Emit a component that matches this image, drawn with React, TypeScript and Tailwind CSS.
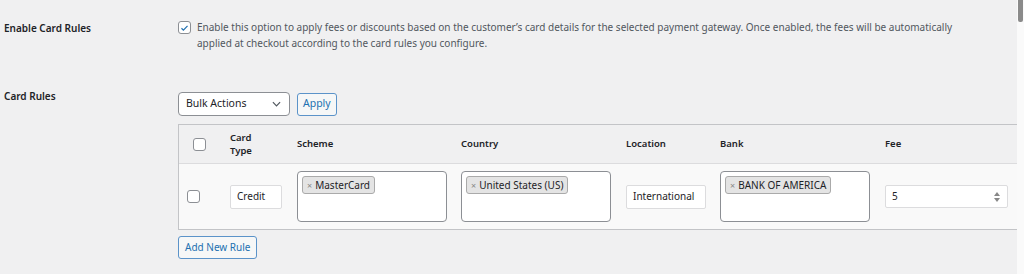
import React from "react";

const font = { fontFamily: '"Noto Sans", "Open Sans", sans-serif' };

const Tag = ({ label }: { label: string }) => (
  <span className="inline-flex items-center h-[18px] px-[4px] rounded-[3px] border border-[#aaaaaa] bg-[#e4e4e4] text-[10px] text-[#1d2327] leading-none whitespace-nowrap">
    <span className="text-[#888] text-[9px] mr-[3px]">×</span>
    {label}
  </span>
);

const MultiSelect = ({ value }: { value: string }) => (
  <div className="w-[150px] h-[51px] rounded-[4px] border border-[#8c8f94] bg-white p-[4px]">
    <Tag label={value} />
  </div>
);

const Check = ({ checked = false }: { checked?: boolean }) => (
  <span className="flex items-center justify-center w-[13px] h-[13px] rounded-[3px] border border-[#8c8f94] bg-white">
    {checked && (
      <svg viewBox="0 0 20 20" className="w-[12px] h-[12px]">
        <path d="M4.5 10.5l3.5 3.5 7.5-8" fill="none" stroke="#2271b1" strokeWidth="2.2" />
      </svg>
    )}
  </span>
);

export default function App() {
  return (
    <div className="flex w-[1024px] h-[274px] bg-[#f0f0f1] text-[#1d2327] overflow-hidden" style={font}>
      <div className="flex-1 flex flex-col pt-[19px]">
        {/* Enable row */}
        <div className="flex">
          <div className="w-[178px] pl-[4px] pt-[1px] text-[10px] font-semibold leading-[16px]">Enable Card Rules</div>
          <div className="flex gap-[6px]">
            <div className="pt-[2px]"><Check checked /></div>
            <p className="w-[762px] text-[10px] leading-[16px] text-[#50575e]">
              Enable this option to apply fees or discounts based on the customer’s card details for the selected payment gateway. Once enabled, the fees will be automatically applied at checkout according to the card rules you configure.
            </p>
          </div>
        </div>

        {/* Card rules row */}
        <div className="flex mt-[41px]">
          <div className="w-[178px] pl-[4px] -mt-[4px] text-[10px] font-semibold leading-[16px]">Card Rules</div>
          <div className="flex-1 flex flex-col">
            <div className="flex items-center gap-[7px] h-[24px]">
              <div className="flex items-center justify-between w-[112px] h-[24px] rounded-[4px] border border-[#8c8f94] bg-white pl-[7px] pr-[8px] text-[10.5px]">
                <span>Bulk Actions</span>
                <svg viewBox="0 0 10 6" className="w-[9px] h-[6px]">
                  <path d="M1 1l4 4 4-4" fill="none" stroke="#50575e" strokeWidth="1.3" />
                </svg>
              </div>
              <button className="h-[23px] px-[5px] rounded-[3px] border border-[#5b93c9] bg-[#f6f7f7] text-[#2271b1] text-[10.5px]">Apply</button>
            </div>

            {/* table */}
            <div className="mt-[8px] border-l border-t border-b border-[#c3c4c7] text-[9.5px]">
              <div className="grid grid-cols-[51px_67px_164px_165px_94px_165px_1fr] h-[39px] items-center bg-[#f0f0f1] border-b border-[#dcdcde] font-semibold">
                <div className="pl-[14px]"><Check /></div>
                <div className="leading-[13px]">Card<br />Type</div>
                <div>Scheme</div>
                <div>Country</div>
                <div>Location</div>
                <div>Bank</div>
                <div>Fee</div>
              </div>
              <div className="grid grid-cols-[51px_67px_164px_165px_94px_165px_1fr] h-[65px] items-center bg-[#f9f9f9] text-[10px]">
                <div className="pl-[8px]"><Check /></div>
                <div className="w-[52px] h-[24px] flex items-center pl-[6px] bg-white border border-[#dcdcde] rounded-[2px]">Credit</div>
                <MultiSelect value="MasterCard" />
                <MultiSelect value="United States (US)" />
                <div className="w-[80px] h-[24px] flex items-center pl-[6px] bg-white border border-[#dcdcde] rounded-[2px]">International</div>
                <MultiSelect value="BANK OF AMERICA" />
                <div className="w-[123px] h-[23px] flex items-center justify-between pl-[6px] pr-[7px] bg-white border border-[#dcdcde] rounded-[2px]">
                  <span>5</span>
                  <span className="flex flex-col gap-[2px] items-center">
                    <svg viewBox="0 0 6 4" className="w-[6px] h-[4px]"><path d="M0 4L3 0l3 4z" fill="#888" /></svg>
                    <svg viewBox="0 0 6 4" className="w-[6px] h-[4px]"><path d="M0 0l3 4 3-4z" fill="#888" /></svg>
                  </span>
                </div>
              </div>
            </div>

            <div className="mt-[3px]">
              <button className="h-[23px] px-[6px] rounded-[3px] border border-[#5b93c9] bg-[#f6f7f7] text-[#2271b1] text-[10px]">Add New Rule</button>
            </div>
          </div>
        </div>
      </div>

      {/* scrollbar */}
      <div className="w-[7px] bg-[#fafafa] flex flex-col">
        <div className="w-[5px] h-[22px] ml-[1px] rounded-b-[2px] bg-[#8a8a8a]" />
      </div>
    </div>
  );
}
